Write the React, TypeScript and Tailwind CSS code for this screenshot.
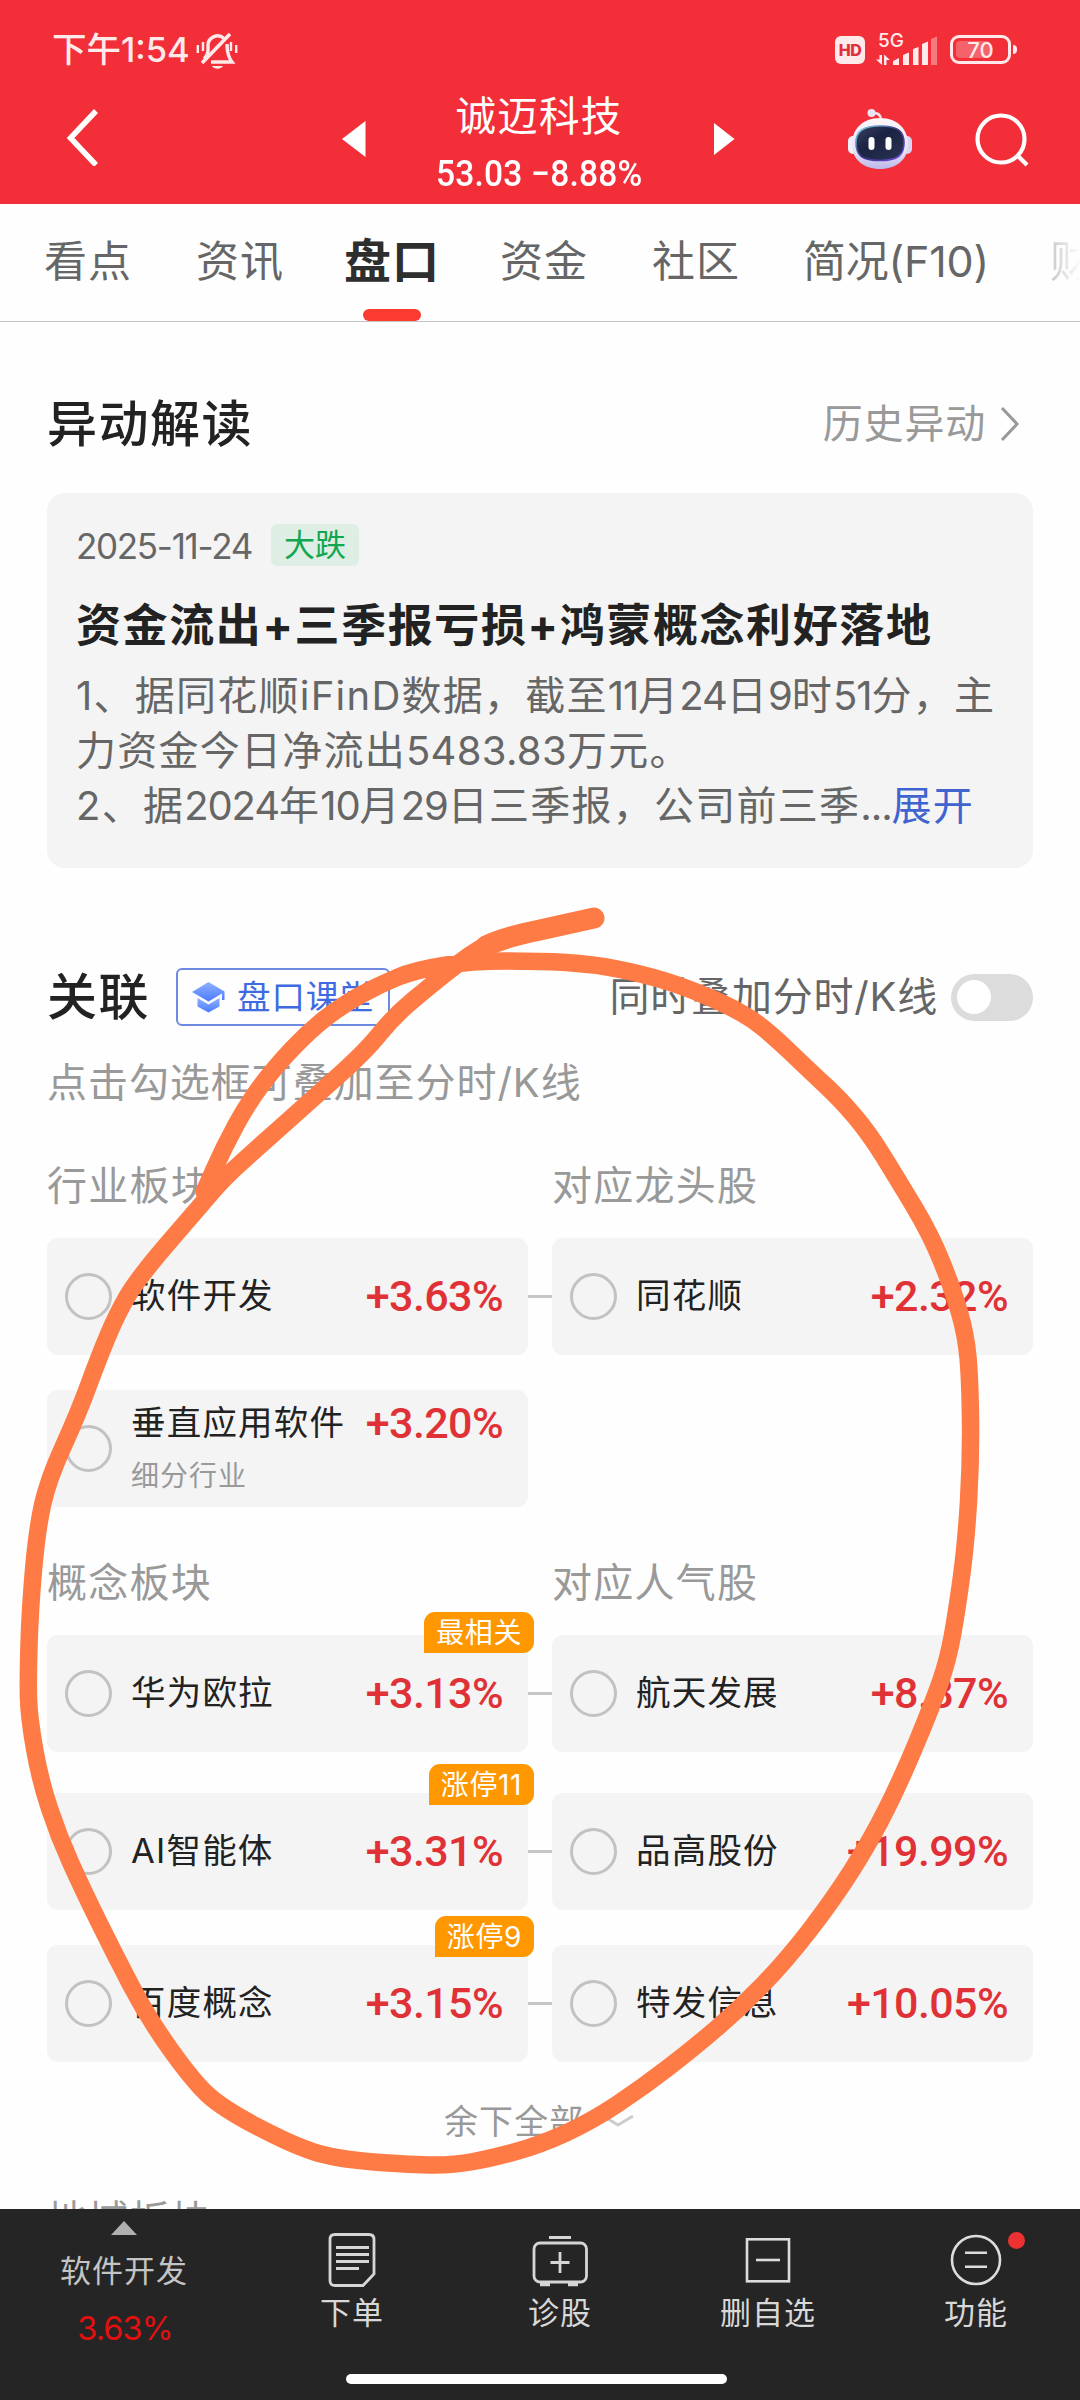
import React from 'react';

interface Stock {
  name: string;
  change: string;
  sub?: string;
  tag?: string;
}

interface Row {
  board: Stock;
  leader?: Stock;
}

const tabs = ['看点', '资讯', '盘口', '资金', '社区', '简况(F10)'];

const industryRows: Row[] = [
  { board: { name: '软件开发', change: '+3.63%' }, leader: { name: '同花顺', change: '+2.32%' } },
  { board: { name: '垂直应用软件', change: '+3.20%', sub: '细分行业' } },
];

const conceptRows: Row[] = [
  { board: { name: '华为欧拉', change: '+3.13%', tag: '最相关' }, leader: { name: '航天发展', change: '+8.87%' } },
  { board: { name: 'AI智能体', change: '+3.31%', tag: '涨停11' }, leader: { name: '品高股份', change: '+19.99%' } },
  { board: { name: '百度概念', change: '+3.15%', tag: '涨停9' }, leader: { name: '特发信息', change: '+10.05%' } },
];

// Points of the hand-drawn marker loop
const strokePoints: [number, number][] = [
  [595, 917], [540, 929], [500, 939], [480, 948], [460, 962], [430, 986], [394, 1016], [365, 1052], [310, 1101],
  [262, 1144], [225, 1177], [200, 1206], [138, 1278], [117, 1314], [99, 1357], [78, 1414], [48, 1480],
  [37, 1530], [30, 1610], [28, 1680], [29, 1717], [40, 1780], [59, 1837], [83, 1890], [114, 1953],
  [148, 2018], [193, 2081], [222, 2108], [290, 2144], [335, 2159], [413, 2165], [455, 2165], [492, 2158],
  [540, 2145], [592, 2121], [643, 2087], [695, 2047], [740, 2008], [785, 1962], [833, 1900], [871, 1840],
  [902, 1778], [933, 1703], [948, 1660], [957, 1610], [966, 1543], [971, 1460], [970, 1380], [966, 1335],
  [953, 1290], [931, 1235], [898, 1180], [869, 1133], [840, 1099], [812, 1073], [766, 1029], [736, 1009],
  [688, 988], [643, 974], [592, 964], [540, 961], [472, 961], [415, 970], [379, 985], [344, 1004],
  [310, 1030], [275, 1067], [248, 1103], [224, 1147], [204, 1192],
];

function smoothPath(points: [number, number][]) {
  let d = `M${points[0][0]} ${points[0][1]}`;
  for (let i = 1; i < points.length - 1; i++) {
    const [x, y] = points[i];
    const [nx, ny] = points[i + 1];
    d += ` Q${x} ${y} ${(x + nx) / 2} ${(y + ny) / 2}`;
  }
  const last = points[points.length - 1];
  return `${d} L${last[0]} ${last[1]}`;
}

// Digits sit tighter than the Chinese text around them
const Num: React.FC<{ children: string }> = ({ children }) => <span className="tracking-[-1.100px]">{children}</span>;

const StatusBar: React.FC = () => (
  <div className="flex h-[68px] items-center pt-[31px] pl-[52px] text-[#ffe9ea]">
    <span className="w-[141px] whitespace-nowrap text-[34.500px] leading-[38px] font-medium">下午1:54</span>
    <svg className="ml-[3px] h-[38px] w-[42px]" viewBox="0 0 42 38" fill="none" stroke="currentColor" strokeWidth="3.4">
      <path d="M8 28 C13 23 12 19 12 14 A9.5 9.5 0 0 1 28 7.500" />
      <path d="M6 32 L34 3" strokeWidth="3.6" />
      <path d="M31 13 C31 21 32 26 36 31 H15" />
      <path d="M1.800 14 V22 M7 11 V20 M35 11 V20 M40.200 14 V22" strokeWidth="2.400" />
      <path d="M16 35 H27 C25 38.500 18 38.500 16 35 Z" fill="currentColor" stroke="none" />
    </svg>
    <div className="ml-[597px] flex h-7 w-[30px] items-center justify-center rounded-md bg-[#ffe9ea] font-[Inter] text-[16px] font-extrabold tracking-[-0.5px] text-[#e0303a]">
      HD
    </div>
    <div className="relative ml-[11px] h-[36px] w-[62px]">
      <span className="absolute -top-[3px] left-0.5 font-[Inter] text-[19px] leading-6 font-medium">5G</span>
      <svg className="absolute inset-0" width="62" height="36" viewBox="0 0 62 36" fill="currentColor">
        <path d="M3.500 23 H6 V33 L0 27.500 H3.500 Z M8 33 V22.500 L14 28 H10.500 V33 Z" />
        <path d="M17 29 L23 26 V33 H17 Z M27 23 L33 20.500 V33 H27 Z M37 17 L42.500 15 V33 H37 Z M46 12 L52 9.500 V33 H46 Z" />
        <path d="M55 7 L61 4.500 V33 H55 Z" opacity=".4" />
      </svg>
    </div>
    <div className="ml-[12px] flex items-center">
      <div className="relative flex h-[29px] w-[61px] items-center justify-center rounded-[9px] border-3 border-current">
        <div className="absolute top-[3px] left-[3px] h-[17px] w-[34px] rounded-[4px] bg-white/25" />
        <span className="relative font-[Inter] text-[22px] leading-5 font-medium">70</span>
      </div>
      <div className="ml-0.5 h-[9px] w-[4px] rounded-r bg-current" />
    </div>
  </div>
);

const RobotIcon: React.FC = () => (
  <svg width="64" height="62" viewBox="0 0 64 62" fill="none">
    <defs>
      <linearGradient id="shell" x1="0" y1="0" x2="0" y2="1">
        <stop offset="0" stopColor="#fdf6fa" />
        <stop offset=".65" stopColor="#e6e2f6" />
        <stop offset="1" stopColor="#bcb8ea" />
      </linearGradient>
      <linearGradient id="face" x1="0" y1="0" x2="1" y2="1">
        <stop offset="0" stopColor="#3a4260" />
        <stop offset=".4" stopColor="#1b2342" />
        <stop offset="1" stopColor="#2c3454" />
      </linearGradient>
      <linearGradient id="rim" x1="0" y1="0" x2="1" y2="1">
        <stop offset="0" stopColor="#7fe0f0" />
        <stop offset=".5" stopColor="#3a2f80" />
        <stop offset="1" stopColor="#6a4ee0" />
      </linearGradient>
    </defs>
    <path d="M24 5.500 C31 4 33 8 33 12" stroke="#ffe0e4" strokeWidth="2.600" />
    <circle cx="23.500" cy="5" r="4" fill="#ece4f4" />
    <rect x="0" y="28" width="10" height="18" rx="5" fill="#f3effa" />
    <rect x="54" y="28" width="10" height="18" rx="5" fill="#d9d5f3" />
    <path d="M32 10 C50 10 60 22 60 36 C60 52 48 61 32 61 C16 61 4 52 4 36 C4 22 14 10 32 10 Z" fill="url(#shell)" />
    <path d="M32 18 C49 18 56 23 56 35 C56 47 50 52.500 32 52.500 C14 52.500 8 47 8 35 C8 23 15 18 32 18 Z" fill="url(#face)" stroke="url(#rim)" strokeWidth="1.600" />
    <rect x="20.500" y="29" width="6" height="13" rx="3" fill="#fff" />
    <rect x="37.500" y="29" width="6" height="13" rx="3" fill="#fff" />
  </svg>
);

const Header: React.FC = () => (
  <header className="h-[204px] shrink-0 bg-[#f22f38] text-white">
    <StatusBar />
    <div className="flex h-[136px] items-center">
      <svg className="ml-[66px]" width="34" height="60" viewBox="0 0 34 60" fill="none" stroke="#fff" strokeWidth="5.500">
        <path d="M30 5 L4.500 32 L30 59" />
      </svg>
      <svg className="mt-[6px] ml-[242px]" width="24" height="36" viewBox="0 0 24 36" fill="#fff">
        <path d="M0 18 L23.500 0 V36 Z" />
      </svg>
      <div className="ml-[33px] flex w-[280px] flex-col items-center pt-[15px]">
        <span className="text-[40.500px] leading-[56px] tracking-[1.300px]">诚迈科技</span>
        <span className="mt-[4px] scale-x-[.92] font-[Roboto] text-[36.500px] leading-[50px] font-medium tracking-[0.200px]">53.03 −8.88%</span>
      </div>
      <svg className="mt-[6px] ml-[35px]" width="21" height="32" viewBox="0 0 21 32" fill="#fff">
        <path d="M0 0 L20.500 16 L0 32 Z" />
      </svg>
      <div className="mt-[5px] ml-[113px]">
        <RobotIcon />
      </div>
      <svg className="mt-[8px] ml-[63px]" width="54" height="54" viewBox="0 0 54 54" fill="none" stroke="#fff" strokeWidth="4.200">
        <circle cx="26" cy="26" r="23.500" />
        <path d="M42 42 L52 52" />
      </svg>
    </div>
  </header>
);

const TabBar: React.FC = () => (
  <nav className="flex h-[118px] shrink-0 items-stretch gap-16 overflow-hidden border-b border-[#c4c4c4] pl-[44px] text-[#666]">
    {tabs.map((tab, i) => (
      <div
        key={tab}
        className={`relative flex shrink-0 items-center justify-center pb-[2px] whitespace-nowrap ${
          i === 5 ? 'w-[184px]' : 'w-[88px]'
        } ${i === 2 ? 'text-[47px] font-bold text-[#2e2e2e]' : 'text-[43px]'}`}
      >
        <span className={i === 5 ? 'tracking-[-0.200px]' : 'tracking-[1px]'}>{tab}</span>
        {i === 2 && <div className="absolute bottom-0 left-1/2 h-3 w-[58px] -translate-x-1/2 rounded-full bg-[#fb3a30]" />}
      </div>
    ))}
    <div className="-ml-0.5 flex w-[44px] shrink-0 items-center bg-gradient-to-r from-[#c8c8c8] to-white to-70% bg-clip-text pb-[2px] text-[43px] text-transparent">
      财
    </div>
  </nav>
);

const StockCard: React.FC<{ stock: Stock; tagClass?: string }> = ({ stock, tagClass = '-top-[29px]' }) => (
  <div className="relative flex h-[117px] w-[481px] items-center rounded-[11px] bg-[#f4f4f4] pr-[25px] pl-[18px]">
    <div className="h-[47px] w-[47px] shrink-0 rounded-full border-3 border-[#c2c2c2]" />
    <div className="ml-[19px] flex-1">
      <div className="flex items-center justify-between pb-[2px]">
        <span className="text-[34.500px] leading-[48px] tracking-[1.200px] whitespace-nowrap text-[#222]">{stock.name}</span>
        <span className="font-[Roboto] text-[43px] leading-[48px] font-medium tracking-[-0.600px] text-[#e03236]">{stock.change}</span>
      </div>
      {stock.sub && <div className="mt-[5px] text-[28px] leading-[44px] tracking-[1px] text-[#999]">{stock.sub}</div>}
    </div>
    {stock.tag && (
      <div
        className={`absolute -right-[6px] flex h-[41px] items-center rounded-[11px] rounded-bl-none bg-[#ff9800] px-[12px] text-[28px] tracking-[0.600px] whitespace-nowrap text-white ${tagClass}`}
      >
        {stock.tag}
      </div>
    )}
  </div>
);

const StockRow: React.FC<{ row: Row; tagClass?: string }> = ({ row, tagClass }) => (
  <div className="flex items-center">
    <StockCard stock={row.board} tagClass={tagClass} />
    {row.leader && (
      <>
        <div className="h-[3px] w-6 bg-[#c6c6c6]" />
        <StockCard stock={row.leader} />
      </>
    )}
  </div>
);

const ColumnTitles: React.FC<{ left: string; right: string }> = ({ left, right }) => (
  <div className="flex h-[56px] items-center pt-[2px] text-[40px] tracking-[1.250px] text-[#999]">
    <span className="w-[505px]">{left}</span>
    <span>{right}</span>
  </div>
);

const NewsSection: React.FC = () => (
  <section>
    <div className="flex h-[60px] items-center justify-between pt-[2px] pr-[13px]">
      <h2 className="text-[50px] font-medium tracking-[1.500px] text-[#222]">异动解读</h2>
      <div className="flex items-center text-[#999]">
        <span className="text-[40px] tracking-[0.800px]">历史异动</span>
        <svg className="ml-[14px]" width="20" height="36" viewBox="0 0 20 36" fill="none" stroke="currentColor" strokeWidth="3">
          <path d="M2 2 L17 18 L2 34" />
        </svg>
      </div>
    </div>
    <div className="mt-[40px] h-[375px] rounded-[18px] bg-[#f4f4f4] pt-[31px] pl-[29px]">
      <div className="flex h-[42px] items-center">
        <span className="w-[195px] pt-0.5 font-[Inter] text-[35px] tracking-[-1.300px] text-[#666]">2025-11-24</span>
        <span className="flex h-[42px] w-[88px] items-center justify-center rounded-md bg-[#deeee4] text-[31px] text-[#12a650]">大跌</span>
      </div>
      <h3 className="mt-[28px] text-[45px] leading-[64px] font-bold tracking-[1.600px] whitespace-nowrap text-[#222]">
        资金流出+三季报亏损+鸿蒙概念利好落地
      </h3>
      <div className="mt-[10px] text-[40px] leading-[55px] tracking-[1.250px] whitespace-nowrap text-[#666]">
        <p>
          1、据同花顺iFinD数据，截至<Num>11</Num>月<Num>24</Num>日<Num>9</Num>时<Num>51</Num>分，主
        </p>
        <p>
          力资金今日净流出<span className="tracking-[0.300px]">5483.83</span>万元。
        </p>
        <p>
          2、据<Num>2024</Num>年<Num>10</Num>月<Num>29</Num>日三季报，公司前三季<Num>...</Num>
          <span className="text-[#3f64cf]">展开</span>
        </p>
      </div>
    </div>
  </section>
);

const RelatedSection: React.FC = () => (
  <section className="mt-[99px]">
    <div className="flex h-[60px] items-center">
      <h2 className="w-[129px] text-[50px] font-medium tracking-[1.500px] text-[#222]">关联</h2>
      <div className="flex h-[58px] w-[214px] items-center rounded-md border-2 border-[#6c8ae2] pl-[14px] text-[#3f6be2]">
        <svg width="33" height="32" viewBox="0 0 33 32">
          <defs>
            <linearGradient id="cap" x1="0" y1="0" x2="0" y2="1">
              <stop offset="0" stopColor="#8fb0ff" />
              <stop offset="1" stopColor="#4a7bff" />
            </linearGradient>
          </defs>
          <path d="M16.500 1 L32.500 10.500 V19 H30 V12.500 L16.500 20.500 L0 11 Z" fill="url(#cap)" />
          <path d="M5.500 17 L16.500 23.500 L27.500 17 V25.500 L16.500 31.500 L5.500 25.500 Z" fill="url(#cap)" />
        </svg>
        <span className="ml-[12px] text-[33.500px] tracking-[0.900px] whitespace-nowrap">盘口课堂</span>
      </div>
      <div className="ml-auto flex items-center">
        <span className="text-[40px] tracking-[0.800px] whitespace-nowrap text-[#666]">同时叠加分时/K线</span>
        <div className="ml-[13px] flex h-[47px] w-[82px] items-center rounded-full bg-[#dcdcdc] pl-[6px]">
          <div className="h-[34px] w-[34px] rounded-full bg-white" />
        </div>
      </div>
    </div>
    <p className="mt-[28px] text-[40px] leading-[56px] tracking-[0.950px] text-[#999]">点击勾选框可叠加至分时/K线</p>

    <div className="mt-[46px]">
      <ColumnTitles left="行业板块" right="对应龙头股" />
    </div>
    <div className="mt-[25px] flex flex-col gap-[35px]">
      {industryRows.map((row) => (
        <StockRow key={row.board.name} row={row} />
      ))}
    </div>

    <div className="mt-[47px]">
      <ColumnTitles left="概念板块" right="对应人气股" />
    </div>
    <div className="mt-[25px] flex flex-col">
      {conceptRows.map((row, i) => (
        <div key={row.board.name} className={i === 0 ? '' : i === 1 ? 'mt-[41px]' : 'mt-[35px]'}>
          <StockRow row={row} tagClass={i === 0 ? '-top-[23px]' : '-top-[29px]'} />
        </div>
      ))}
    </div>

    <div className="mt-[35px] flex h-12 items-center pl-[397px] text-[#999]">
      <span className="text-[34px] tracking-[1.100px]">余下全部</span>
      <svg className="ml-[18px]" width="32" height="14" viewBox="0 0 32 14" fill="none" stroke="#ccc" strokeWidth="3">
        <path d="M1 2 L16 11 L31 2" />
      </svg>
    </div>
    <div className="mt-[47px] text-[40px] leading-[56px] tracking-[1.250px] text-[#999]">地域板块</div>
  </section>
);

const BottomItem: React.FC<{ label: string; children: React.ReactNode }> = ({ label, children }) => (
  <div className="flex w-[208px] flex-col items-center pt-[22px]">
    <div className="relative h-[56px]">{children}</div>
    <span className="mt-[6px] text-[31px] leading-[40px] tracking-[1px] text-[#d8d8d8]">{label}</span>
  </div>
);

const BottomBar: React.FC = () => (
  <footer className="relative h-[191px] w-full shrink-0 bg-[#252525]">
    <div className="flex h-[165px] items-start">
      <div className="flex w-[248px] flex-col items-center pt-[12px]">
        <svg width="26" height="14" viewBox="0 0 26 14" fill="#b0b0b0">
          <path d="M13 0 L26 14 H0 Z" />
        </svg>
        <span className="mt-[14px] text-[31px] leading-[44px] tracking-[1px] text-[#c4c4c4]">软件开发</span>
        <span className="mt-[14px] pl-0.5 font-[Inter] text-[32.500px] leading-[44px] tracking-[-0.900px] text-[#e3100f]">3.63%</span>
      </div>
      <BottomItem label="下单">
        <svg width="48" height="56" viewBox="0 0 48 56" fill="none" stroke="#d6d6d6" strokeWidth="2.800">
          <path d="M7 3.500 H41 Q46 3.500 46 8.500 V43 L35 54.500 H7 Q2 54.500 2 49.500 V8.500 Q2 3.500 7 3.500 Z" />
          <path d="M8 16.500 H41 M8 23.500 H41 M8 30.500 H41 M8 37.500 H31" />
        </svg>
      </BottomItem>
      <BottomItem label="诊股">
        <svg width="56" height="56" viewBox="0 0 56 56" fill="none" stroke="#d6d6d6" strokeWidth="2.800">
          <rect x="2" y="12" width="52.500" height="39" rx="6" />
          <path d="M17 6.500 H39 M28 21 V42 M18.500 31.500 H37.500" />
          <path d="M8 53.500 H18 M36 53.500 H46" strokeWidth="3.600" />
        </svg>
      </BottomItem>
      <BottomItem label="删自选">
        <svg width="46" height="56" viewBox="0 0 46 56" fill="none" stroke="#dcdcdc" strokeWidth="2.600">
          <rect x="2" y="8.300" width="42" height="42" />
          <path d="M11 29 H35" />
        </svg>
      </BottomItem>
      <BottomItem label="功能">
        <svg width="52" height="56" viewBox="0 0 52 56" fill="none" stroke="#dcdcdc" strokeWidth="2.600">
          <circle cx="26" cy="29" r="24" />
          <path d="M15 21.700 H37 M15 35.700 H37" />
        </svg>
        <div className="absolute top-px -right-[23px] h-[17px] w-[17px] rounded-full bg-[#eb3131]" />
      </BottomItem>
    </div>
    <div className="mx-auto h-[10px] w-[381px] -translate-x-[4px] rounded-full bg-white" />
  </footer>
);

export default function App() {
  return (
    <div className="relative flex h-[2400px] w-[1080px] flex-col overflow-hidden bg-[#fefefe] font-['Inter','Noto_Sans_CJK_SC',sans-serif]">
      <Header />
      <TabBar />
      <main className="h-[1887px] shrink-0 overflow-hidden px-[47px] pt-[71px]">
        <NewsSection />
        <RelatedSection />
      </main>
      <BottomBar />

      {/* Marker drawing over the page */}
      <svg className="pointer-events-none absolute inset-0" width="1080" height="2400" viewBox="0 0 1080 2400" fill="none" stroke="#ff7b45" strokeLinecap="round" strokeLinejoin="round">
        <path d={smoothPath(strokePoints)} strokeWidth="17.500" />
        <path d="M594 918 L540 930 Q505 937 486 946" strokeWidth="21" />
      </svg>
    </div>
  );
}
